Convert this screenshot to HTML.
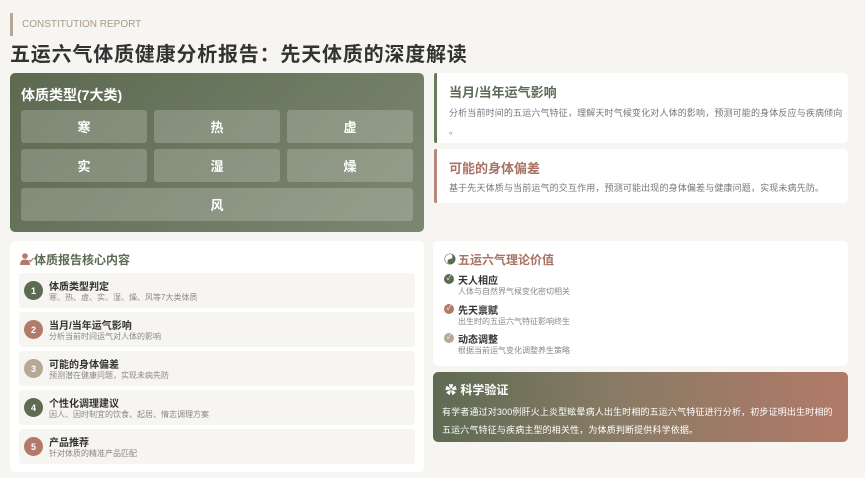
<!DOCTYPE html>
<html><head><meta charset="utf-8"><style>
*{margin:0;padding:0;box-sizing:border-box}
body{width:865px;height:478px;background:#f7f5f1;font-family:"Liberation Sans","Noto Sans CJK SC",sans-serif;position:relative;overflow:hidden;color:#333}
.a{position:absolute}
.tile{position:absolute;background:rgba(255,255,255,.2);border-radius:3px;color:#fff;font-weight:bold;font-size:13px;display:flex;align-items:center;justify-content:center}
.card{position:absolute;background:#fff;border-radius:5px}
.item{position:absolute;left:19px;width:396px;height:35px;background:#f7f5f1;border-radius:3px}
.item .c{position:absolute;left:5px;top:8px;width:19px;height:19px;border-radius:50%;color:#fff;font-size:9px;font-weight:bold;display:flex;align-items:center;justify-content:center}
.item .t{position:absolute;left:30px;top:5px;font-size:10px;font-weight:bold;color:#333}
.item .s{position:absolute;left:30px;top:19px;font-size:8px;color:#888}
.v .ck{position:absolute;left:11px;width:10px;height:10px;border-radius:50%;color:#fff;font-size:7px;line-height:10px;text-align:center}
.v .t{position:absolute;left:25px;font-size:10px;font-weight:bold;color:#333}
.v .s{position:absolute;left:25px;font-size:8px;color:#888}
</style></head><body>
<div class="a" style="left:10px;top:13px;width:3px;height:23px;background:#b5a894"></div>
<div class="a" style="left:22px;top:19px;font-size:10px;color:#a89b88">CONSTITUTION REPORT</div>
<div class="a" style="left:10px;top:38px;font-size:20px;font-weight:bold;color:#333;letter-spacing:0.8px">五运六气体质健康分析报告：先天体质的深度解读</div>

<div class="a" style="left:10px;top:73px;width:414px;height:159px;border-radius:5px;background:linear-gradient(135deg,#5d6a52,#7b8770)">
<div class="a" style="left:11px;top:12px;font-size:14px;font-weight:bold;color:#fff">体质类型(7大类)</div>
</div>
<div class="tile" style="left:21px;top:110px;width:126px;height:33px">寒</div>
<div class="tile" style="left:154px;top:110px;width:126px;height:33px">热</div>
<div class="tile" style="left:287px;top:110px;width:126px;height:33px">虚</div>
<div class="tile" style="left:21px;top:149px;width:126px;height:33px">实</div>
<div class="tile" style="left:154px;top:149px;width:126px;height:33px">湿</div>
<div class="tile" style="left:287px;top:149px;width:126px;height:33px">燥</div>
<div class="tile" style="left:21px;top:188px;width:392px;height:33px">风</div>

<div class="card" style="left:434px;top:73px;width:414px;height:70px;border-left:3px solid #6b7a5e;border-radius:2px 5px 5px 2px">
<div class="a" style="left:12px;top:9px;font-size:13px;font-weight:bold;color:#5e6b53">当月/当年运气影响</div>
<div class="a" style="left:12px;top:31px;font-size:9px;color:#777;line-height:18px;letter-spacing:0.15px;white-space:nowrap">分析当前时间的五运六气特征，理解天时气候变化对人体的影响，预测可能的身体反应与疾病倾向<br>。</div>
</div>
<div class="card" style="left:434px;top:149px;width:414px;height:54px;border-left:3px solid #b7877a;border-radius:2px 5px 5px 2px">
<div class="a" style="left:12px;top:9px;font-size:13px;font-weight:bold;color:#a87264">可能的身体偏差</div>
<div class="a" style="left:12px;top:32px;font-size:9px;color:#777;letter-spacing:0.15px">基于先天体质与当前运气的交互作用，预测可能出现的身体偏差与健康问题，实现未病先防。</div>
</div>

<div class="card" style="left:10px;top:241px;width:414px;height:231px">
<svg class="a" style="left:10px;top:12px" width="14" height="12" viewBox="0 0 14 12"><circle cx="5" cy="3" r="2.8" fill="#b27a68"/><path d="M0 12c0-4 2-5.5 5-5.5s5 1.5 5 5.5z" fill="#b27a68"/><path d="M9 7l1.5 1.5L13.5 5" stroke="#b27a68" stroke-width="1.2" fill="none"/></svg>
<div class="a" style="left:24px;top:10px;font-size:12px;font-weight:bold;color:#5e6b53">体质报告核心内容</div>
</div>
<div class="item" style="top:273px"><div class="c" style="background:#5e6b53">1</div><div class="t">体质类型判定</div><div class="s">寒、热、虚、实、湿、燥、风等7大类体质</div></div>
<div class="item" style="top:312px"><div class="c" style="background:#b27a68">2</div><div class="t">当月/当年运气影响</div><div class="s">分析当前时间运气对人体的影响</div></div>
<div class="item" style="top:351px"><div class="c" style="background:#b5a894">3</div><div class="t">可能的身体偏差</div><div class="s">预测潜在健康问题，实现未病先防</div></div>
<div class="item" style="top:390px"><div class="c" style="background:#5e6b53">4</div><div class="t">个性化调理建议</div><div class="s">因人、因时制宜的饮食、起居、情志调理方案</div></div>
<div class="item" style="top:429px"><div class="c" style="background:#b27a68">5</div><div class="t">产品推荐</div><div class="s">针对体质的精准产品匹配</div></div>

<div class="card v" style="left:433px;top:241px;width:415px;height:125px">
<svg class="a" style="left:11px;top:12px" width="12" height="12" viewBox="0 0 12 12"><circle cx="6" cy="6" r="5.5" fill="#5e6b53"/><path d="M6 1a2.5 2.5 0 0 1 0 5a2.5 2.5 0 0 0 0 5a5 5 0 0 1 0-10z" fill="#fff"/></svg>
<div class="a" style="left:25px;top:10px;font-size:12px;font-weight:bold;color:#a87264">五运六气理论价值</div>
<div class="ck" style="top:33px;background:#5e6b53">✓</div><div class="t" style="top:31px">天人相应</div><div class="s" style="top:45px">人体与自然界气候变化密切相关</div>
<div class="ck" style="top:63px;background:#b27a68">✓</div><div class="t" style="top:61px">先天禀赋</div><div class="s" style="top:75px">出生时的五运六气特征影响终生</div>
<div class="ck" style="top:92px;background:#b5a894">✓</div><div class="t" style="top:90px">动态调整</div><div class="s" style="top:104px">根据当前运气变化调整养生策略</div>
</div>

<div class="a" style="left:433px;top:372px;width:415px;height:70px;border-radius:5px;background:linear-gradient(90deg,#5e6b53,#8a7b66 45%,#b27a68)">
<div class="a" style="left:12px;top:9px;font-size:12px;font-weight:bold;color:#fff">✿ 科学验证</div>
<div class="a" style="left:9px;top:31px;font-size:9px;color:#fff;line-height:18px;letter-spacing:0.15px;white-space:nowrap">有学者通过对300例肝火上炎型眩晕病人出生时相的五运六气特征进行分析，初步证明出生时相的<br>五运六气特征与疾病主型的相关性，为体质判断提供科学依据。</div>
</div>
</body></html>
